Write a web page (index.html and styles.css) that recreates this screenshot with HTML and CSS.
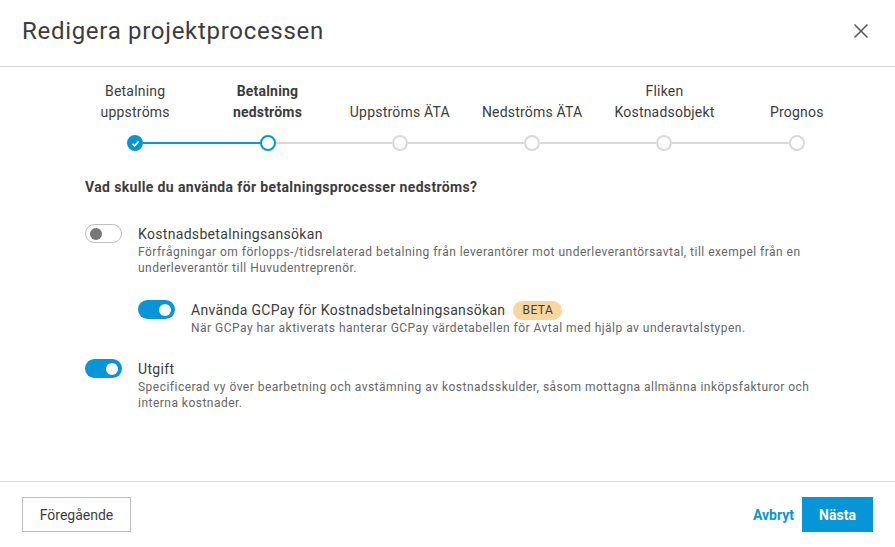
FILE: index.html
```html
<!DOCTYPE html>
<html lang="sv">
<head>
<meta charset="utf-8">
<title>Redigera projektprocessen</title>
<link rel="stylesheet" href="styles.css">
</head>
<body>
<div class="dialog">
  <header class="header">
    <h1 class="title">Redigera projektprocessen</h1>
    <button class="close" aria-label="Stäng">
      <svg width="16" height="16" viewBox="0 0 16 16"><path d="M1.5 1.5 L14.5 14.5 M14.5 1.5 L1.5 14.5" stroke="#555" stroke-width="1.5" fill="none"/></svg>
    </button>
  </header>

  <div class="stepper">
    <div class="step done">
      <div class="step-label">Betalning<br>uppströms</div>
      <div class="track"><span class="line none"></span><span class="dot done-dot"><svg width="9" height="9" viewBox="0 0 9 9"><path d="M1.5 4.8 L3.6 6.8 L7.6 2.4" stroke="#fff" stroke-width="1.6" fill="none"/></svg></span><span class="line blue"></span></div>
    </div>
    <div class="step active">
      <div class="step-label">Betalning<br>nedströms</div>
      <div class="track"><span class="line blue"></span><span class="dot active-dot"></span><span class="line"></span></div>
    </div>
    <div class="step">
      <div class="step-label">Uppströms ÄTA</div>
      <div class="track"><span class="line"></span><span class="dot"></span><span class="line"></span></div>
    </div>
    <div class="step">
      <div class="step-label">Nedströms ÄTA</div>
      <div class="track"><span class="line"></span><span class="dot"></span><span class="line"></span></div>
    </div>
    <div class="step">
      <div class="step-label">Fliken<br>Kostnadsobjekt</div>
      <div class="track"><span class="line"></span><span class="dot"></span><span class="line"></span></div>
    </div>
    <div class="step">
      <div class="step-label">Prognos</div>
      <div class="track"><span class="line"></span><span class="dot"></span><span class="line none"></span></div>
    </div>
  </div>

  <main class="content">
    <h2 class="question">Vad skulle du använda för betalningsprocesser nedströms?</h2>

    <div class="option">
      <span class="toggle off"><span class="knob"></span></span>
      <div class="option-text">
        <div class="option-title">Kostnadsbetalningsansökan</div>
        <div class="option-desc">Förfrågningar om förlopps-/tidsrelaterad betalning från leverantörer mot underleverantörsavtal, till exempel från en underleverantör till Huvudentreprenör.</div>
      </div>
    </div>

    <div class="option nested">
      <span class="toggle on"><span class="knob"></span></span>
      <div class="option-text">
        <div class="option-title">Använda GCPay för Kostnadsbetalningsansökan <span class="badge">BETA</span></div>
        <div class="option-desc">När GCPay har aktiverats hanterar GCPay värdetabellen för Avtal med hjälp av underavtalstypen.</div>
      </div>
    </div>

    <div class="option">
      <span class="toggle on"><span class="knob"></span></span>
      <div class="option-text">
        <div class="option-title">Utgift</div>
        <div class="option-desc">Specificerad vy över bearbetning och avstämning av kostnadsskulder, såsom mottagna allmänna inköpsfakturor och interna kostnader.</div>
      </div>
    </div>
  </main>

  <footer class="footer">
    <button class="btn secondary">Föregående</button>
    <div class="footer-right">
      <button class="btn link">Avbryt</button>
      <button class="btn primary">Nästa</button>
    </div>
  </footer>
</div>
</body>
</html>
```

FILE: styles.css
```css
* { box-sizing: border-box; }
html, body { margin: 0; padding: 0; background: #fff; }
body {
  font-family: Roboto, "Noto Sans", Arial, sans-serif;
  color: #3c3c3c;
  width: 895px;
  height: 547px;
  overflow: hidden;
}
.dialog {
  display: flex;
  flex-direction: column;
  height: 547px;
}
.header {
  height: 67px;
  border-bottom: 1px solid #dcdcdc;
  display: flex;
  align-items: center;
  justify-content: space-between;
  padding: 0 26px 4px 22px;
}
.title {
  margin: 0;
  font-size: 24px;
  font-weight: 400;
  color: #3c3c3c;
  letter-spacing: 0.7px;
}
.close {
  border: 0;
  background: none;
  padding: 0;
  width: 16px;
  height: 16px;
  display: flex;
}
.stepper {
  display: flex;
  padding: 14px 32px 0 69px;
}
.step {
  flex: 1;
  display: flex;
  flex-direction: column;
  align-items: stretch;
}
.step-label {
  height: 42px;
  display: flex;
  align-items: flex-end;
  justify-content: center;
  text-align: center;
  font-size: 14px;
  line-height: 21px;
  color: #3c3c3c;
  letter-spacing: 0.2px;
}
.step.active .step-label { font-weight: 700; }
.track {
  margin-top: 12px;
  display: flex;
  align-items: center;
  height: 16px;
}
.line {
  flex: 1;
  height: 2px;
  background: #d9d9d9;
}
.line.blue { background: #0696d7; }
.line.none { background: transparent; }
.dot {
  width: 16px;
  height: 16px;
  border-radius: 50%;
  border: 2px solid #d9d9d9;
  background: #fff;
  flex: none;
  display: flex;
  align-items: center;
  justify-content: center;
}
.done-dot { background: #0696d7; border-color: #0696d7; }
.active-dot { border-color: #0696d7; }
.content {
  flex: 1;
  padding: 27px 55px 0 85px;
}
.question {
  margin: 0 0 28px;
  font-size: 14px;
  line-height: 18px;
  font-weight: 700;
  color: #3c3c3c;
  letter-spacing: 0.36px;
}
.option {
  display: flex;
  gap: 16px;
  margin-bottom: 24px;
}
.option.nested { margin-left: 53px; margin-bottom: 23px; }
.toggle {
  flex: none;
  width: 37px;
  height: 19px;
  border-radius: 10px;
  display: flex;
  align-items: center;
  padding: 0 4px;
}
.toggle.off {
  border: 1px solid #bdbdbd;
  background: #fff;
  justify-content: flex-start;
}
.toggle.off .knob { background: #777; }
.toggle.on {
  background: #0696d7;
  justify-content: flex-end;
}
.toggle.on .knob { background: #fff; }
.knob {
  width: 12px;
  height: 12px;
  border-radius: 50%;
}
.option-text { flex: 1; }
.option-title {
  font-size: 14px;
  line-height: 19px;
  padding-top: 1px;
  color: #3c3c3c;
  display: flex;
  align-items: center;
  gap: 8px;
  letter-spacing: 0.32px;
}
.badge {
  display: inline-block;
  background: #f9d6a0;
  color: #3c3c3c;
  font-size: 12px;
  line-height: 19px;
  height: 19px;
  padding: 0 9px;
  border-radius: 10px;
  letter-spacing: 0.5px;
}
.option-desc {
  font-size: 12px;
  line-height: 16px;
  color: #666;
  letter-spacing: 0.48px;
}
.footer {
  height: 66px;
  border-top: 1px solid #dcdcdc;
  display: flex;
  align-items: center;
  justify-content: space-between;
  padding: 0 22px 0 22px;
}
.footer-right {
  display: flex;
  align-items: center;
  gap: 8px;
}
.btn {
  font-family: inherit;
  font-size: 14px;
  height: 35px;
  cursor: pointer;
}
.btn.secondary {
  width: 109px;
  border: 1px solid #bdbdbd;
  background: #fff;
  color: #3c3c3c;
}
.btn.link {
  border: 0;
  background: none;
  color: #0696d7;
  font-weight: 700;
  padding: 0;
}
.btn.primary {
  width: 71px;
  border: 0;
  background: #0696d7;
  color: #fff;
  font-weight: 700;
}
```
